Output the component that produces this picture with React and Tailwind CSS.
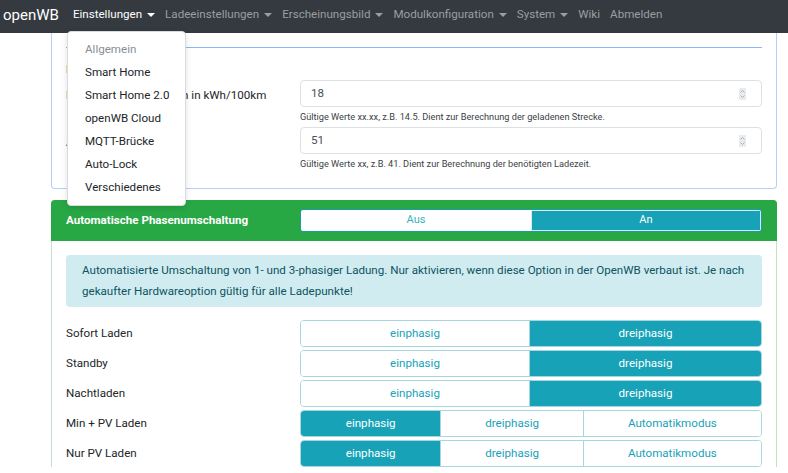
import React from 'react';

const navItems = [
  { label: 'Einstellungen', caret: true, active: true },
  { label: 'Ladeeinstellungen', caret: true },
  { label: 'Erscheinungsbild', caret: true },
  { label: 'Modulkonfiguration', caret: true },
  { label: 'System', caret: true },
  { label: 'Wiki' },
  { label: 'Abmelden' },
];

const menu = ['Allgemein', 'Smart Home', 'Smart Home 2.0', 'openWB Cloud', 'MQTT-Brücke', 'Auto-Lock', 'Verschiedenes'];

function Caret() {
  return <span className="ml-[5px] inline-block border-x-[4px] border-t-[4px] border-x-transparent border-t-current align-middle" />;
}

function Spinner() {
  return (
    <svg width="7" height="12" viewBox="0 0 7 12" className="bg-[#e9ecef]">
      <path d="M1.5 4.5 L3.5 2.5 L5.5 4.5" fill="none" stroke="#9aa0a6" strokeWidth="0.8" />
      <path d="M1.5 7.5 L3.5 9.5 L5.5 7.5" fill="none" stroke="#9aa0a6" strokeWidth="0.8" />
    </svg>
  );
}

function NumberRow({ label, value, help }) {
  return (
    <div className="flex">
      <div className="w-[234px] shrink-0 pt-[7px] text-[11.6px] text-[#212529]">{label}</div>
      <div className="flex-1">
        <div className="flex h-[27px] items-center justify-between rounded-[4px] border border-[#dde1e5] pl-[10px] pr-[15px] text-[11.6px] text-[#495057]">
          <span>{value}</span>
          <Spinner />
        </div>
        <div className="mt-[4px] text-[9.2px] leading-[12px] text-[#3d4246]">{help}</div>
      </div>
    </div>
  );
}

function Seg({ options, active, widths }) {
  return (
    <div className="flex h-[27px] flex-1 overflow-hidden rounded-[4px] border border-[#a8d6de] text-[11.6px]">
      {options.map((o, i) => (
        <div
          key={o}
          style={{ width: widths[i] }}
          className={
            'flex items-center justify-center ' +
            (i > 0 ? 'border-l border-[#a8d6de] ' : '') +
            (i === active ? 'bg-[#17a2b8] text-white' : 'bg-white text-[#17a2b8]')
          }
        >
          {o}
        </div>
      ))}
    </div>
  );
}

const rows = [
  { label: 'Sofort Laden', three: false },
  { label: 'Standby', three: false },
  { label: 'Nachtladen', three: false },
  { label: 'Min + PV Laden', three: true },
  { label: 'Nur PV Laden', three: true },
];

export default function App() {
  return (
    <div className="relative h-[473px] w-[788px] overflow-hidden bg-white font-['Roboto',sans-serif]">
      {/* Navbar */}
      <nav className="flex h-[33px] items-center bg-[#343a40] pb-[3px] pl-[3px]">
        <span className="mr-[9px] text-[15px] text-white">openWB</span>
        {navItems.map((n) => (
          <span
            key={n.label}
            className={'flex items-center px-[5px] text-[11.6px] ' + (n.active ? 'text-white' : 'text-[#9b9ea1]')}
          >
            {n.label}
            {n.caret && <Caret />}
          </span>
        ))}
      </nav>

      {/* Content */}
      <div className="pl-[51px] pr-[11px]">
        <div className="rounded-b-[4px] border border-t-0 border-[#b7cdfb] px-[14px] pb-[18px]">
          <div className="h-[15px] border-b border-[#8fb3f7]" />
          <div className="pt-[14px] text-[11.6px] leading-[14px] text-[#212529]">Ladepunkt 1</div>
          <div className="mt-[4px] flex flex-col gap-[4px]">
            <NumberRow
              label="Durchschnittsverbrauch in kWh/100km"
              value="18"
              help="Gültige Werte xx.xx, z.B. 14.5. Dient zur Berechnung der geladenen Strecke."
            />
            <NumberRow
              label="Akkugröße in kWh"
              value="51"
              help="Gültige Werte xx, z.B. 41. Dient zur Berechnung der benötigten Ladezeit."
            />
          </div>
        </div>

        <div className="mt-[11px] rounded-t-[4px] border border-b-0 border-[#bfe3c8]">
          <div className="-m-px flex h-[41px] items-center rounded-t-[4px] bg-[#28a745] px-[15px]">
            <div className="w-[234px] text-[11.6px] font-bold text-white">Automatische Phasenumschaltung</div>
            <div className="flex h-[23px] flex-1 overflow-hidden rounded-[3px] border border-[#1c9ca8] text-[11px]">
              <div className="flex w-1/2 items-center justify-center bg-white text-[#3ab0c3]">Aus</div>
              <div className="flex w-1/2 items-center justify-center border border-[#d6eef2] bg-[#17a2b8] text-white">An</div>
            </div>
          </div>
          <div className="px-[14px] pt-[15px]">
            <div className="rounded-[4px] bg-[#d1ecf1] px-[16px] py-[5px] text-[11.6px] leading-[21px] text-[#0c5460]">
              Automatisierte Umschaltung von 1- und 3-phasiger Ladung. Nur aktivieren, wenn diese Option in der OpenWB verbaut ist. Je nach gekaufter Hardwareoption gültig für alle Ladepunkte!
            </div>
            <div className="mt-[13px] flex flex-col gap-[3px]">
              {rows.map((r) => (
                <div key={r.label} className="flex items-center">
                  <div className="w-[234px] text-[11.6px] text-[#212529]">{r.label}</div>
                  {r.three ? (
                    <Seg options={['einphasig', 'dreiphasig', 'Automatikmodus']} active={0} widths={['140px', '143px', '179px']} />
                  ) : (
                    <Seg options={['einphasig', 'dreiphasig']} active={1} widths={['229px', '233px']} />
                  )}
                </div>
              ))}
            </div>
          </div>
        </div>
      </div>

      {/* Dropdown menu */}
      <div className="absolute left-[67px] top-[31px] w-[119px] rounded-[4px] border border-[#d9dcdf] bg-white py-[6px] shadow-[0_2px_6px_rgba(0,0,0,0.12)]">
        {menu.map((m, i) => (
          <div key={m} className={'h-[23px] pl-[17px] text-[11.6px] leading-[23px] ' + (i === 0 ? 'text-[#868e96]' : 'text-[#212529]')}>
            {m}
          </div>
        ))}
      </div>
    </div>
  );
}
